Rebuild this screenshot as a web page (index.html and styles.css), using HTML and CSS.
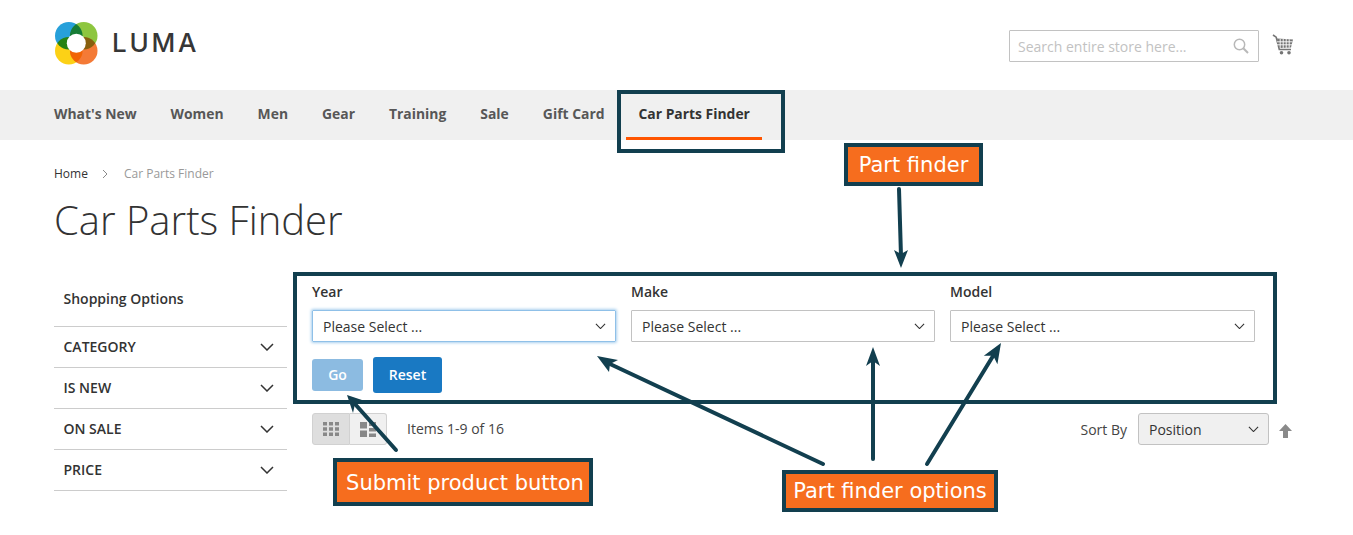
FILE: index.html
```html
<!DOCTYPE html>
<html lang="en">
<head>
<meta charset="utf-8">
<title>Car Parts Finder</title>
<link rel="stylesheet" href="styles.css">
</head>
<body>
<div class="page">
  <header class="header">
    <a class="logo">
      <svg class="logo-mark" width="44" height="44" viewBox="0 0 44 44">
        <circle class="petal" cx="14.800" cy="14.800" r="13.800" fill="#27a0da"/>
        <circle class="petal" cx="29.700" cy="14.800" r="13.800" fill="#8dc63f"/>
        <circle class="petal" cx="14.800" cy="29.700" r="13.800" fill="#fcd116"/>
        <circle class="petal" cx="29.700" cy="29.700" r="13.800" fill="#f47a36"/>
        <circle cx="22.300" cy="22.300" r="9.500" fill="#fff"/>
      </svg>
      <span class="logo-text">LUMA</span>
    </a>
    <div class="header-tools">
      <div class="search">
        <span class="search-text">Search entire store here...</span>
        <svg width="16" height="16" viewBox="0 0 16 16" fill="none" stroke="#b8b8b8" stroke-width="1.500"><circle cx="6.500" cy="6.500" r="5.200"/><path d="M10.300 10.300 15 15" stroke-width="2"/></svg>
      </div>
      <svg class="cart" width="22" height="21" viewBox="0 0 22 21">
        <path class="cart-handle" d="M1 1 4.200 3.200 7.300 15.500H19"/>
        <path class="cart-basket" d="M5 4.500 21 5.500 19 13.500 7 14Z"/>
        <path class="cart-grid" d="M8.200 5v9M11.200 5v9M14.200 5v9M17.200 5.200v8.500M5 7.800h15.500M5 10.800h15"/>
        <circle class="cart-wheel" cx="9.500" cy="18.800" r="1.800"/>
        <circle class="cart-wheel" cx="17" cy="18.800" r="1.800"/>
      </svg>
    </div>
  </header>

  <nav class="nav">
    <a class="nav-item">What's New</a>
    <a class="nav-item">Women</a>
    <a class="nav-item">Men</a>
    <a class="nav-item">Gear</a>
    <a class="nav-item">Training</a>
    <a class="nav-item">Sale</a>
    <a class="nav-item">Gift Card</a>
    <a class="nav-item nav-active">Car Parts Finder</a>
  </nav>

  <div class="breadcrumb">
    <a class="crumb">Home</a>
    <svg class="crumb-sep" width="6" height="10" viewBox="0 0 6 10" fill="none" stroke="#8a8a8a"><path d="M1 1l4 4-4 4"/></svg>
    <span class="crumb-current">Car Parts Finder</span>
  </div>
  <h1 class="title">Car Parts Finder</h1>

  <main class="columns">
    <aside class="sidebar">
      <div class="shop-title">Shopping Options</div>
      <div class="filter"><span>CATEGORY</span><svg class="chev-lg" width="14" height="8" viewBox="0 0 14 8"><path d="M1 1l6 6 6-6"/></svg></div>
      <div class="filter"><span>IS NEW</span><svg class="chev-lg" width="14" height="8" viewBox="0 0 14 8"><path d="M1 1l6 6 6-6"/></svg></div>
      <div class="filter"><span>ON SALE</span><svg class="chev-lg" width="14" height="8" viewBox="0 0 14 8"><path d="M1 1l6 6 6-6"/></svg></div>
      <div class="filter"><span>PRICE</span><svg class="chev-lg" width="14" height="8" viewBox="0 0 14 8"><path d="M1 1l6 6 6-6"/></svg></div>
    </aside>
    <section class="content">
      <div class="finder">
        <div class="finder-fields">
          <div class="field">
            <div class="field-label">Year</div>
            <div class="select select-focus"><span>Please Select ...</span><svg class="chev" width="12" height="7" viewBox="0 0 12 7"><path d="M1 1l5 5 5-5"/></svg></div>
          </div>
          <div class="field">
            <div class="field-label">Make</div>
            <div class="select"><span>Please Select ...</span><svg class="chev" width="12" height="7" viewBox="0 0 12 7"><path d="M1 1l5 5 5-5"/></svg></div>
          </div>
          <div class="field">
            <div class="field-label">Model</div>
            <div class="select"><span>Please Select ...</span><svg class="chev" width="12" height="7" viewBox="0 0 12 7"><path d="M1 1l5 5 5-5"/></svg></div>
          </div>
        </div>
        <div class="finder-actions">
          <button class="btn btn-go">Go</button>
          <button class="btn btn-reset">Reset</button>
        </div>
      </div>
      <div class="toolbar">
        <div class="modes">
          <span class="mode mode-active">
            <svg width="16" height="14" viewBox="0 0 16 14" fill="#888"><rect width="4" height="3.500"/><rect x="6" width="4" height="3.500"/><rect x="12" width="4" height="3.500"/><rect y="5.250" width="4" height="3.500"/><rect x="6" y="5.250" width="4" height="3.500"/><rect x="12" y="5.250" width="4" height="3.500"/><rect y="10.500" width="4" height="3.500"/><rect x="6" y="10.500" width="4" height="3.500"/><rect x="12" y="10.500" width="4" height="3.500"/></svg>
          </span>
          <span class="mode">
            <svg width="16" height="15" viewBox="0 0 16 15" fill="#888"><rect width="7" height="6.500"/><rect x="9" width="7" height="4"/><rect y="8.500" width="7" height="6.500"/><rect x="9" y="6" width="7" height="3.500"/><rect x="9" y="11.500" width="7" height="3.500"/></svg>
          </span>
        </div>
        <span class="items">Items 1-9 of 16</span>
        <div class="sorter">
          <span class="sort-label">Sort By</span>
          <div class="sort-select"><span>Position</span><svg class="chev" width="12" height="7" viewBox="0 0 12 7"><path d="M1 1l5 5 5-5"/></svg></div>
          <svg class="sort-arrow" width="13" height="14" viewBox="0 0 13 14" fill="#8a8a8a"><path d="M6.500 0 13 7H9v7H4V7H0z"/></svg>
        </div>
      </div>
    </section>
  </main>

  <div class="frame frame-nav"></div>
  <div class="frame frame-finder"></div>
  <div class="note note-finder">Part finder</div>
  <div class="note note-submit">Submit product button</div>
  <div class="note note-options">Part finder options</div>
  <svg class="arrows" width="1353" height="535" viewBox="0 0 1353 535">
    <g class="arrow-lines">
      <path d="M899 189 901 256"/>
      <path d="M823 464 610 364"/>
      <path d="M873 459 873 360"/>
      <path d="M927 464 993 356"/>
      <path d="M396 450 355 404"/>
    </g>
    <g class="arrow-heads">
      <path d="M901 268 894 250 901 254 908 250Z"/>
      <path d="M597 356 618 360 610 364 609 372Z"/>
      <path d="M873 347 880 366 873 361 866 366Z"/>
      <path d="M1001 343 997.400 364.200 993.200 355.800 983.800 355.800Z"/>
      <path d="M347 395 362 400 355 404 353 413Z"/>
    </g>
  </svg>
</div>
</body>
</html>
```
FILE: styles.css
```css
* { box-sizing: border-box; }
html, body { margin: 0; padding: 0; }
body {
  font-family: "Open Sans", "Liberation Sans", sans-serif;
  color: #333;
  background: #fff;
  overflow: hidden;
}
.page { position: relative; width: 1353px; height: 535px; overflow: hidden; }

.header {
  height: 90px;
  display: flex;
  justify-content: space-between;
  padding: 21px 59px 0 54px;
}
.logo { display: flex; align-items: flex-start; gap: 14px; height: 46px; }
.petal { mix-blend-mode: multiply; }
.logo-mark { isolation: isolate; }
.logo-text {
  font-family: "Inter", sans-serif;
  font-size: 26px;
  font-weight: 500;
  letter-spacing: 2.800px;
  line-height: 44px;
  color: #363636;
}
.header-tools { display: flex; align-items: flex-start; gap: 13px; padding-top: 9px; }
.search {
  width: 250px;
  height: 32px;
  border: 1px solid #c2c2c2;
  border-radius: 1px;
  padding: 0 9px 0 8px;
  display: flex;
  align-items: center;
  justify-content: space-between;
}
.search-text { font-size: 14px; color: #c2c2c2; }
.cart { margin-top: 4px; }
.cart-handle { fill: none; stroke: #757575; stroke-width: 1.600; }
.cart-basket { fill: #757575; }
.cart-grid { fill: none; stroke: #fff; stroke-width: .9; }
.cart-wheel { fill: #757575; }

.nav {
  height: 50px;
  background: #f0f0f0;
  display: flex;
  padding-left: 54px;
  gap: 34px;
  align-items: flex-start;
}
.nav-item {
  font-size: 13.900px;
  font-weight: 700;
  line-height: 20px;
  color: #575757;
  padding-top: 14px;
}
.nav-active { color: #333; position: relative; }
.nav-active::after {
  content: "";
  position: absolute;
  left: -12px;
  right: -12px;
  top: 47px;
  height: 3px;
  background: #ff5501;
}

.breadcrumb {
  display: flex;
  align-items: center;
  padding: 25px 0 0 54px;
  height: 43px;
  font-size: 12px;
  line-height: 16px;
}
.crumb { color: #333; }
.crumb-sep { margin: 0 16px 0 14px; }
.crumb-current { color: #999; }
.title {
  margin: 0;
  padding: 12px 0 0 54px;
  font-size: 40px;
  font-weight: 300;
  line-height: 50px;
  height: 90px;
  color: #333;
}

.columns {
  display: grid;
  grid-template-columns: 233px 980px;
  column-gap: 25px;
  padding-left: 54px;
}
.shop-title {
  font-size: 14px;
  font-weight: 600;
  padding: 16px 0 0 9.500px;
  height: 53px;
  line-height: 20px;
}
.filter {
  height: 41px;
  border-top: 1px solid #ccc;
  display: flex;
  align-items: center;
  justify-content: space-between;
  padding: 0 13px 0 9.500px;
  font-size: 14px;
  font-weight: 600;
  color: #333;
}
.filter span { margin-top: -2px; }
.filter:last-child { height: 42px; border-bottom: 1px solid #ccc; }
.chev-lg { fill: none; stroke: #333; stroke-width: 1.500; }
.chev { width: 11px; height: 6.500px; fill: none; stroke: #333; stroke-width: 1.200; }

.finder { padding-top: 9px; height: 133px; }
.finder-fields { display: grid; grid-template-columns: 304px 304px 305px; column-gap: 15px; width: 943px; }
.field-label { font-size: 14px; font-weight: 600; line-height: 20px; margin-bottom: 8px; }
.select {
  height: 32px;
  border: 1px solid #c2c2c2;
  border-radius: 1px;
  display: flex;
  align-items: center;
  justify-content: space-between;
  padding: 0 9px 0 10px;
  font-size: 14px;
  color: #333;
}
.select-focus { border-color: #8fc0e8; box-shadow: 0 0 3px 1px #a9d0ee; }
.finder-actions { display: flex; gap: 10px; align-items: flex-start; margin-top: 15px; }
.btn {
  font-family: inherit;
  font-size: 14px;
  font-weight: 600;
  color: #fff;
  border: 0;
  border-radius: 3px;
  background: #1979c3;
  padding: 0 0 2px;
}
.btn-go { width: 51px; height: 32px; background: #8cbbe1; margin-top: 2px; }
.btn-reset { width: 69px; height: 36px; }

.toolbar {
  height: 32px;
  margin-top: 7px;
  display: flex;
  align-items: center;
}
.modes { display: flex; height: 32px; width: 75px; }
.mode {
  flex: 1;
  display: flex;
  align-items: center;
  justify-content: center;
  background: #f0f0f0;
  border: 1px solid #d1d1d1;
  border-radius: 0 3px 3px 0;
  border-left: 0;
}
.mode-active { background: #dedede; border-left: 1px solid #d1d1d1; border-radius: 3px 0 0 3px; }
.items { margin: -2px 0 0 20px; font-size: 14px; color: #444; }
.sorter { margin-left: auto; display: flex; align-items: center; }
.sort-label { font-size: 14px; color: #444; margin-right: 11px; }
.sort-select {
  width: 131px;
  height: 32px;
  background: #f0f0f0;
  border: 1px solid #c2c2c2;
  border-radius: 3px;
  display: flex;
  align-items: center;
  justify-content: space-between;
  padding: 0 9px 0 10px;
  font-size: 14px;
  color: #333;
}
.sort-arrow { margin: 4px 0 0 10px; }

.frame {
  position: absolute;
  border: 4px solid #123f4f;
  pointer-events: none;
}
.frame-nav { left: 617px; top: 90px; width: 168px; height: 63px; }
.frame-finder { left: 293px; top: 272px; width: 984px; height: 132px; }
.note {
  position: absolute;
  background: #f66d1e;
  border: 4px solid #123f4f;
  color: #fff;
  font-family: "DejaVu Sans", sans-serif;
  font-size: 21px;
  display: flex;
  align-items: center;
  justify-content: center;
  white-space: nowrap;
}
.note-finder { left: 844px; top: 143px; width: 139px; height: 43px; }
.note-submit { left: 333px; top: 458px; width: 260px; height: 48px; padding: 2px 0 0 4px; }
.note-options { left: 782px; top: 470px; width: 216px; height: 42px; }
.arrows { position: absolute; left: 0; top: 0; pointer-events: none; }
.arrow-lines path { fill: none; stroke: #123f4f; stroke-width: 4; stroke-linecap: round; }
.arrow-heads path { fill: #123f4f; }
```
